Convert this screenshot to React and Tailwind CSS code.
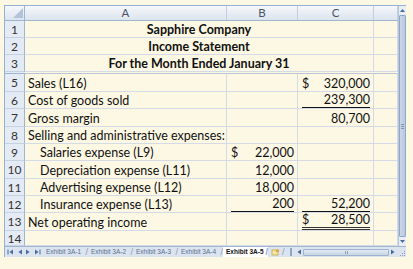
const cols = [
  { id: "A", w: 202 },
  { id: "B", w: 71 },
  { id: "C", w: 76 },
  { id: "D", w: 24 },
];

const titles = [
  { n: 1, text: "Sapphire Company" },
  { n: 2, text: "Income Statement" },
  { n: 3, text: "For the Month Ended January 31" },
];

const rows = [
  { n: 5, h: 18, a: "Sales (L16)", c: { d: true, v: "320,000" } },
  { n: 6, h: 17, a: "Cost of goods sold", c: { v: "239,300", u: 1 } },
  { n: 7, h: 18, a: "Gross margin", c: { v: "80,700" } },
  { n: 8, h: 17, a: "Selling and administrative expenses:" },
  { n: 9, h: 17, a: "Salaries expense (L9)", ind: true, b: { d: true, v: "22,000" } },
  { n: 10, h: 18, a: "Depreciation expense (L11)", ind: true, b: { v: "12,000" } },
  { n: 11, h: 17, a: "Advertising expense (L12)", ind: true, b: { v: "18,000" } },
  { n: 12, h: 17, a: "Insurance expense (L13)", ind: true, b: { v: "200", u: 1 }, c: { v: "52,200", u: 1 } },
  { n: 13, h: 18, a: "Net operating income", c: { d: true, v: "28,500", u: 2 } },
  { n: 14, h: 15 },
];

const tabs = ["Exhibit 3A-1", "Exhibit 3A-2", "Exhibit 3A-3", "Exhibit 3A-4", "Exhibit 3A-5"];

function RowHead({ n, h }) {
  return (
    <div
      className="w-[20px] shrink-0 flex items-center justify-center pt-[1px] bg-[#e4ebf5] border-r border-b border-r-[#9eb6ce] border-b-[#c5d2e2] text-[12px] leading-none text-[#333]"
      style={{ height: h }}
    >
      {n}
    </div>
  );
}

function Money({ cell, w }) {
  if (!cell) return <div className="shrink-0 h-full border-r border-[#d4dbe6]" style={{ width: w }} />;
  const line =
    cell.u === 1 ? "border-b border-[#111]" : cell.u === 2 ? "border-b-[3px] border-double border-[#333]" : "";
  return (
    <div className="shrink-0 h-full border-r border-[#d4dbe6] flex items-end pl-[4px] pr-[3px]" style={{ width: w }}>
      <div className={`flex-1 flex justify-between leading-[15px] ${line}`}>
        <span>{cell.d ? "$" : ""}</span>
        <span>{cell.v}</span>
      </div>
    </div>
  );
}

function Arrow({ dir, bar }) {
  return (
    <svg width="7" height="6" viewBox="0 0 7 6" className="shrink-0">
      {dir === "l" ? (
        <>
          {bar && <rect x="0.5" y="0.5" width="1" height="5" fill="#4b6a9c" />}
          <path d="M6 0.5 L2.5 3 L6 5.5 Z" fill="#4b6a9c" />
        </>
      ) : (
        <>
          <path d="M1 0.5 L4.5 3 L1 5.5 Z" fill="#4b6a9c" />
          {bar && <rect x="5.5" y="0.5" width="1" height="5" fill="#4b6a9c" />}
        </>
      )}
    </svg>
  );
}

export default function App() {
  return (
    <div className="w-[413px] h-[269px] bg-[#fdf8e4] pl-[4px] pt-[5px] overflow-hidden" style={{ fontFamily: "Lato, 'Open Sans', sans-serif" }}>
      <div className="w-[402px] border-l border-t border-[#95b2d6] flex flex-col">
        <div className="flex">
          <div className="w-[393px] flex flex-col text-[12.5px] text-[#111]">
            <div className="h-[15px] flex bg-gradient-to-b from-[#f6f8fb] to-[#dce4ee] border-b border-[#9eb6ce]">
              <div className="w-[20px] shrink-0 border-r border-[#9eb6ce] relative overflow-hidden">
                <svg width="20" height="14" className="absolute inset-0">
                  <path d="M18 2 L18 12 L8 12 Z" fill="#b3c4da" />
                </svg>
              </div>
              {cols.map((c) => (
                <div
                  key={c.id}
                  className="shrink-0 border-r border-[#c2cfdf] flex items-center justify-center text-[11.5px] text-[#4a5565] leading-none"
                  style={{ width: c.w }}
                >
                  {c.id === "D" ? "" : c.id}
                </div>
              ))}
            </div>

            {titles.map((t) => (
              <div key={t.n} className="flex h-[17px]">
                <RowHead n={t.n} h={17} />
                <div className="w-[349px] shrink-0 border-r border-b border-[#d4dbe6] flex items-end justify-center leading-[15px] font-bold">
                  {t.text}
                </div>
                <div className="w-[24px] shrink-0 border-r border-b border-[#d4dbe6]" />
              </div>
            ))}

            <div className="flex h-[2px]">
              <div className="w-[20px] shrink-0 border-b border-[#9eb6ce] bg-[#e4ebf5]" />
              <div className="flex-1 border-b border-[#b8c6d8]" />
            </div>

            {rows.map((r) => (
              <div key={r.n} className="flex" style={{ height: r.h }}>
                <RowHead n={r.n} h={r.h} />
                <div className="flex flex-1 border-b border-[#d4dbe6]">
                  <div
                    className={`w-[202px] shrink-0 border-r border-[#d4dbe6] flex items-end leading-[15px] whitespace-nowrap ${r.ind ? "pl-[15px]" : "pl-[3px]"}`}
                  >
                    {r.a}
                  </div>
                  <Money cell={r.b} w={71} />
                  <Money cell={r.c} w={76} />
                  <div className="w-[24px] shrink-0 border-r border-[#d4dbe6]" />
                </div>
              </div>
            ))}
          </div>

          <div className="w-[8px] shrink-0 bg-[#e9eef5] flex flex-col items-center border-l border-[#b7c7db]">
            <div className="w-[7px] h-[7px] mt-[1px] flex items-center justify-center">
              <svg width="5" height="3" viewBox="0 0 5 3"><path d="M0 3 L2.5 0 L5 3 Z" fill="#4b6a9c" /></svg>
            </div>
            <div className="w-[7px] flex-1 my-[1px] bg-gradient-to-r from-[#cbd7e6] to-[#b9c9dd] border border-[#8fa8c9] rounded-[1px] flex flex-col items-center justify-center gap-[1px]">
              <div className="w-[3px] h-px bg-[#7f97b8]" />
              <div className="w-[3px] h-px bg-[#7f97b8]" />
              <div className="w-[3px] h-px bg-[#7f97b8]" />
            </div>
            <div className="w-[7px] h-[7px] mb-[1px] flex items-center justify-center">
              <svg width="5" height="3" viewBox="0 0 5 3"><path d="M0 0 L2.5 3 L5 0 Z" fill="#4b6a9c" /></svg>
            </div>
          </div>
        </div>

        <div className="h-[11px] flex items-center bg-[#dbe4ef] border-t border-[#9eb6ce] text-[6.5px] text-[#5a6f8f]" style={{ fontFamily: "'Liberation Sans', sans-serif" }}>
          <div className="w-[38px] shrink-0 flex items-center gap-[2px] pl-[2px]">
            <Arrow dir="l" bar />
            <Arrow dir="l" />
            <Arrow dir="r" />
            <Arrow dir="r" bar />
          </div>
          {tabs.map((t, i) => (
            <div
              key={t}
              className={`shrink-0 h-full flex items-center pl-[3px] w-[45px] ${i === 4 ? "bg-white text-[#111] font-bold" : ""}`}
            >
              <span className="flex-1 whitespace-nowrap">{t}</span>
              <span className="text-[#8da2bf] text-[9px] leading-none">/</span>
            </div>
          ))}
          <div className="w-[14px] shrink-0 flex items-center justify-center">
            <svg width="9" height="7" viewBox="0 0 9 7">
              <rect x="1" y="1" width="6" height="5" fill="#f3e6a6" stroke="#c9a64a" strokeWidth="0.8" />
              <rect x="5" y="0.5" width="3" height="2.5" fill="#e7a63a" />
            </svg>
          </div>
          <div className="w-[8px] shrink-0 text-[#8da2bf] text-[9px] leading-none">/</div>
          <div className="w-[2px] h-[8px] bg-[#8ea6c5] shrink-0" />
          <div className="flex-1 flex items-center h-[8px] ml-[3px] mr-[1px]">
            <Arrow dir="l" />
            <div className="flex-1 h-[7px] mx-[1px] bg-gradient-to-b from-[#e3eaf3] to-[#c8d5e5] border border-[#9db3cf] rounded-[1px] flex items-center justify-center">
              <div className="w-[3px] h-[3px] border-x border-[#8aa1c0]" />
            </div>
            <Arrow dir="r" />
          </div>
          <div className="w-[8px] shrink-0 h-full flex items-end justify-end pr-[1px] pb-[1px]">
            <svg width="5" height="5" viewBox="0 0 5 5">
              <rect x="4" y="0" width="1" height="1" fill="#8aa1c0" />
              <rect x="2" y="2" width="1" height="1" fill="#8aa1c0" />
              <rect x="4" y="2" width="1" height="1" fill="#8aa1c0" />
              <rect x="0" y="4" width="1" height="1" fill="#8aa1c0" />
              <rect x="2" y="4" width="1" height="1" fill="#8aa1c0" />
              <rect x="4" y="4" width="1" height="1" fill="#8aa1c0" />
            </svg>
          </div>
        </div>
      </div>
    </div>
  );
}
